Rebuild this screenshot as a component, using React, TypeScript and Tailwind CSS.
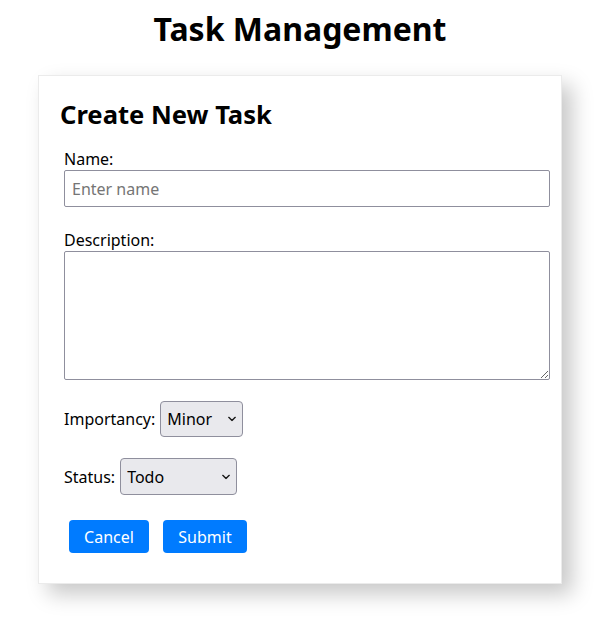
import { useState } from "react";

function Chevron() {
  return (
    <svg
      className="pointer-events-none absolute right-[7px] top-1/2 -translate-y-1/2"
      width="8"
      height="5"
      viewBox="0 0 8 5"
      fill="none"
    >
      <path d="M0.8 0.8 L4 4 L7.2 0.8" stroke="#1a1a1a" strokeWidth="1.4" strokeLinecap="round" strokeLinejoin="round" />
    </svg>
  );
}

export default function App() {
  const [name, setName] = useState("");
  const [description, setDescription] = useState("");
  const [importancy, setImportancy] = useState("minor");
  const [status, setStatus] = useState("todo");

  return (
    <div className="min-h-[628px] w-[600px] bg-white pt-[7px] font-['Noto_Sans',sans-serif] text-black">
      <h1 className="text-center text-[32px] font-bold leading-[44px]">Task Management</h1>

      <div className="ml-[38px] mt-[24px] w-[524px] border border-[#ebebeb] bg-white pb-[30px] pl-[21px] pt-[21px] shadow-[10px_10px_20px_rgba(0,0,0,0.22)]">
        <h2 className="text-[25.6px] font-bold leading-[35px]">Create New Task</h2>

        <form className="pl-[4px] pt-[16px]" onSubmit={(e) => e.preventDefault()}>
          <label className="block text-[16px] leading-[22px]">Name:</label>
          <input
            value={name}
            onChange={(e) => setName(e.target.value)}
            placeholder="Enter name"
            className="block h-[37px] w-[486px] rounded-[2px] border border-[#8f8f9d] px-[7px] text-[16px] placeholder:text-[#757575] focus:outline-none"
          />

          <label className="mt-[22px] block text-[16px] leading-[22px]">Description:</label>
          <textarea
            value={description}
            onChange={(e) => setDescription(e.target.value)}
            className="block h-[129px] w-[486px] rounded-[2px] border border-[#8f8f9d] px-[7px] py-[2px] text-[16px] focus:outline-none"
          />

          <div className="mt-[21px] flex items-center text-[16px]">
            <span className="mr-[5px]">Importancy:</span>
            <div className="relative">
              <select
                value={importancy}
                onChange={(e) => setImportancy(e.target.value)}
                className="block h-[36px] w-[83px] appearance-none rounded-[4px] border border-[#8f8f9d] bg-[#e9e9ed] pl-[6px] text-[16px]"
              >
                <option value="minor">Minor</option>
                <option value="major">Major</option>
                <option value="critical">Critical</option>
              </select>
              <Chevron />
            </div>
          </div>

          <div className="mt-[21px] flex items-center text-[16px]">
            <span className="mr-[5px]">Status:</span>
            <div className="relative">
              <select
                value={status}
                onChange={(e) => setStatus(e.target.value)}
                className="block h-[37px] w-[117px] appearance-none rounded-[4px] border border-[#8f8f9d] bg-[#e9e9ed] pl-[6px] text-[16px]"
              >
                <option value="todo">Todo</option>
                <option value="in-progress">In Progress</option>
                <option value="done">Done</option>
              </select>
              <Chevron />
            </div>
          </div>

          <div className="mt-[25px] flex gap-[14px] pl-[5px]">
            <button
              type="button"
              className="h-[33px] w-[80px] rounded-[4px] bg-[#007bff] text-[16px] text-white"
            >
              Cancel
            </button>
            <button
              type="submit"
              className="h-[33px] w-[84px] rounded-[4px] bg-[#007bff] text-[16px] text-white"
            >
              Submit
            </button>
          </div>
        </form>
      </div>
    </div>
  );
}
